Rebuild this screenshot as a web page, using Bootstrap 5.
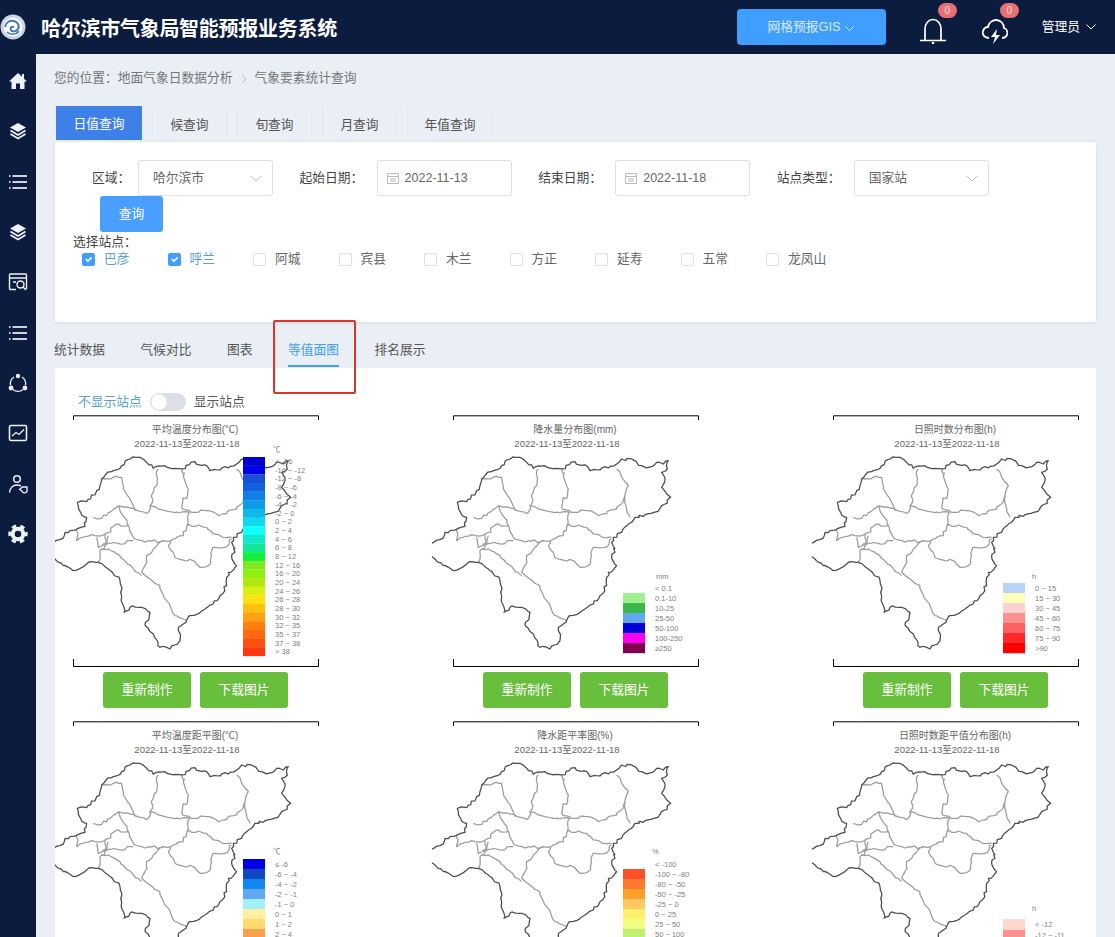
<!DOCTYPE html>
<html lang="zh-CN">

<head>
    <meta charset="UTF-8">
    <meta name="viewport" content="width=device-width, initial-scale=1.0">
    <title>哈尔滨市气象局智能预报业务系统</title>
    <link rel="stylesheet" href="https://cdn.jsdelivr.net/npm/bootstrap@5.3.0/dist/css/bootstrap.min.css">
    <style>
        html, body { height: 100%; }
        body { overflow: hidden; background: #0c1c3e; font-family: "Liberation Sans", "Noto Sans CJK SC", sans-serif; font-size: 12.75px; color: #555; }
        .qx-defs { position: absolute; width: 0; height: 0; }

        .qx-top { height: 54px; color: #fff; }
        .qx-title { margin: 3px 0 0 15px; font-size: 20px; font-weight: 700; letter-spacing: -.27px; }
        .qx-gis { width: 149px; height: 36px; background: #409eff; border: 0; border-radius: 4px; color: #dcebff; font-size: 12.75px; padding: 0; margin-right: 34px; }
        .qx-bell { width: 26px; height: 26px; margin-top: 8px; }
        .qx-bell + .qx-bell { margin-left: 36px; }
        .qx-count { top: -15px; left: 18px; width: 19px; height: 15px; padding: 0; line-height: 15px; font-size: 10px; font-weight: 400; background: #e87070; border-radius: 8px; color: #fde; }
        .qx-user { margin: 0 19px 0 34px; gap: 6px; }

        .qx-side { width: 36px; padding-top: 2px; flex: none; }
        .qx-side a { height: 50.3px; color: #eef2f8; }
        .qx-side svg { width: 20px; height: 20px; }

        .qx-main { background: #e9eff5; padding: 14px 19px 0 18px; overflow: hidden; min-width: 0; height: calc(100vh - 54px); }
        .qx-crumb { height: 20px; line-height: 20px; margin-bottom: 18px; color: #777; }
        .qx-crumb svg { margin: 0 7px 0 8px; }

        .qx-tabs { padding-left: 2px; height: 36px; }
        .qx-tabs .nav-link { width: 75px; height: 35px; padding: 10px 0 0; margin-right: 10px; text-align: center; color: #555; border: 1px solid #e5eaf0; border-bottom: 0; line-height: 16px; }
        .qx-tabs .nav-link.active { width: 86px; height: 34px; background: #3f80e8; color: #fff; border: 0; margin-right: 10px; }
        .qx-tabs .nav-item:last-child .nav-link { width: 86px; }

        .qx-panel { background: #fff; margin-left: 1px; border-radius: 2px; }
        .qx-filter { height: 180px; padding-top: 18px; box-shadow: 0 1px 4px rgba(0, 0, 0, .08); }
        .qx-fields { padding-left: 37px; gap: 26.6px; height: 36px; }
        .qx-label { width: 65px; margin: 0 12px 0 0; white-space: nowrap; color: #444; }
        .qx-label-short { width: 35px; margin-right: 11px; }
        .qx-select { width: 135px; height: 36px; padding: 0 14px; font-size: 12.75px; color: #666; border-color: #dcdfe6; border-radius: 3px; background-size: 12px 12px; background-position: right 10px center;
            background-image: url("data:image/svg+xml,%3csvg xmlns='http://www.w3.org/2000/svg' viewBox='0 0 12 12'%3e%3cpath fill='none' stroke='%23b8bcc4' d='M1 4l5 5 5-5'/%3e%3c/svg%3e"); }
        .qx-date { width: 135px; height: 36px; padding: 0 9px; gap: 6px; font-size: 12.5px; color: #666; border-color: #dcdfe6; border-radius: 3px; }
        .qx-query { width: 63px; height: 36px; margin-left: 45px; padding: 0; background: #4a9eff; border: 0; border-radius: 3px; color: #fff; font-size: 12.75px; display: block; }
        .qx-pick { margin-left: 18px; height: 20px; line-height: 20px; color: #444; }
        .qx-stations { padding-left: 27px; height: 18px; margin-top: -2px; }
        .qx-station { width: 85.5px; gap: 9px; color: #666; }
        .qx-station .form-check-input { width: 13px; height: 13px; margin: 0; border-color: #dcdfe6; border-radius: 2px; flex: none; }
        .qx-station .form-check-input:checked { background-color: #409eff; border-color: #409eff; }
        .qx-station.qx-on { color: #5a9fd8; }

        .qx-subtabs { gap: 35.5px; height: 46px; padding-top: 18px; }
        .qx-subtabs .nav-link { padding: 0 0 5px; line-height: 20px; height: 27px; color: #555; border-bottom: 2px solid transparent; }
        .qx-subtabs .nav-link.active { color: #409eff; border-bottom-color: #409eff; }

        .qx-maps { padding-top: 24px; height: 700px; overflow: hidden; }
        .qx-toggle { padding-left: 23px; height: 20px; margin-bottom: 3px; gap: 8px; }
        .qx-toggle .qx-off { color: #5a9fd8; }
        .qx-toggle .form-check-input { width: 36px; height: 18px; margin: 0; float: none; background-color: #dcdfe6; border: 0; background-image: url("data:image/svg+xml,%3csvg xmlns='http://www.w3.org/2000/svg' viewBox='-4 -4 8 8'%3e%3ccircle r='3.4' fill='%23fff'/%3e%3c/svg%3e"); }
        .qx-toggle .form-check { padding: 0; margin: 0; min-height: 0; height: 18px; }
        .qx-grid { display: grid; grid-template-columns: repeat(3, 380px); }
        .qx-plot { height: 306px; }
        .qx-plot svg { display: block; width: 265px; height: 257px; overflow: visible; }
        .qx-plot text { font-family: "Liberation Sans", "Noto Sans CJK SC", sans-serif; }
        .qx-acts { padding-left: 48px; gap: 9px; }
        .qx-green { width: 88px; height: 36px; padding: 0; background: #67bf3c; border: 0; border-radius: 3px; color: #fff; font-size: 12.75px; }

        .qx-mark { position: absolute; left: 237px; top: 266px; width: 83px; height: 74px; border: 2.5px solid #d9362b; border-radius: 2px; }
    </style>
</head>

<body>
    <svg class="qx-defs" aria-hidden="true">
        <defs>
            <symbol id="region" overflow="visible">
                <g transform="translate(-5 -6) scale(.3333)" fill="none" stroke-linejoin="round">
                    <g stroke="#9c9c9c" stroke-width="3.800">
                        <path d="M155 210L190 205 215 205 220 240 240 270 262 305 295 310 300 290 325 300 345 305 390 312 420 310" />
                        <path d="M325 180L320 230 300 290" />
                        <path d="M395 180L415 240 395 295 430 310 470 305 510 318 560 300 585 260 595 230 575 205 560 180" />
                        <path d="M585 260L590 300 600 325" />
                        <path d="M205 290L235 295 262 305" />
                        <path d="M205 290L235 350 255 390 290 398 340 395 370 390 400 380 420 310" />
                        <path d="M410 350L445 348 470 355 490 375 545 385" />
                        <path d="M360 395L360 420 385 450 430 455 450 475 475 470 490 415 525 415 545 390" />
                        <path d="M340 395L310 420 290 440 285 470 275 490 320 525 350 575 375 620 410 635" />
                        <path d="M155 420L175 420 210 440 250 480 275 500" />
                        <path d="M155 420L150 450 145 460" />
                        <path d="M78 362L80 395 100 385 135 380 165 375 205 345 235 350" />
                        <path d="M130 325L145 330 170 320 205 290" />
                        <path d="M140 385L145 415 170 405 175 380" />
                        <path d="M165 375L165 410 155 420" />
                        <path d="M160 410L250 395" />
                    </g>
                    <path stroke="#4c4c4c" stroke-width="3.800" d="M6 403L30 392 45 370 60 365 78 362 105 352 110 325 95 318 85 298 82 280 110 278 122 270 140 245 155 210 185 188 215 170 240 150 270 145 290 160 310 178 345 170 375 178 395 180 435 158 470 170 480 185 510 183 540 172 560 165 575 150 605 150 635 170 655 175 680 160 700 165 715 155 712 180 695 190 705 215 695 235 722 265 705 285 695 290 672 310 640 322 615 325 595 345 575 370 550 385 545 400 555 430 545 445 560 470 535 490 530 530 510 560 490 585 465 600 420 620 408 640 400 645 385 665 390 695 360 720 330 715 310 675 285 645 300 610 270 595 240 595 222 610 215 565 210 515 180 485 145 460 110 465 70 485 40 470 6 443" />
                </g>
            </symbol>
        </defs>
    </svg>

    <header class="qx-top d-flex align-items-center">
        <svg width="26" height="26" viewBox="0 0 26 26">
            <circle cx="13" cy="13" r="12.5" fill="#c9d5e5" />
            <circle cx="13" cy="13" r="9.5" fill="#fff" />
            <path fill="none" stroke="#3d78b8" stroke-width="2" d="M5 13c1-5 5-7 9-6 4 1 6 5 4 8-2 3-6 3-7 1-1-2 0-4 3-3" />
            <path fill="none" stroke="#3d78b8" stroke-width="1.5" d="M7 18c3 3 9 3 12-1" />
        </svg>
        <h1 class="qx-title">哈尔滨市气象局智能预报业务系统</h1>
        <div class="ms-auto d-flex align-items-center">
            <button type="button" class="btn qx-gis">网格预报GIS
                <svg width="11" height="7" viewBox="0 0 11 7"><path fill="none" stroke="currentColor" d="M1 1l4.5 4.5L10 1" /></svg>
            </button>
            <div class="position-relative qx-bell">
                <svg width="26" height="26" viewBox="0 0 26 26">
                    <path fill="none" stroke="#fff" stroke-width="1.7" d="M5 22V11C5 5.5 8.5 1.5 13 1.5S21 5.500 21 11V22M0 22.500H26" />
                    <circle cx="13" cy="25" r="1.300" fill="#fff" />
                </svg>
                <span class="badge position-absolute qx-count">0</span>
            </div>
            <div class="position-relative qx-bell">
                <svg width="26" height="26" viewBox="0 0 26 26">
                    <path fill="none" stroke="#fff" stroke-width="1.800" d="M7 20C2 20 0 16 1 13 2 10 4 9 6 9 7 4 11 2 14 2 19 2 22 6 22 10 25 11 26 14 25 17 24 19 22 20 20 20" />
                    <path fill="#fff" d="M15 11L9 19H13L11 26 18 17H14Z" />
                </svg>
                <span class="badge position-absolute qx-count">0</span>
            </div>
            <div class="qx-user d-flex align-items-center">管理员
                <svg width="10" height="6" viewBox="0 0 10 6"><path fill="none" stroke="#fff" d="M.5.500L5 5 9.500.5" /></svg>
            </div>
        </div>
    </header>

    <div class="d-flex">
        <nav class="qx-side nav flex-column">
            <a href="#" class="d-flex align-items-center justify-content-center"><svg viewBox="0 0 20 20"><path fill="currentColor" d="M10 2L1 10.500H3.500V18H8V12.500H12V18H16.500V10.500H19L16 7.700V3H14V5.800Z" /></svg></a>
            <a href="#" class="d-flex align-items-center justify-content-center"><svg viewBox="0 0 20 20"><path fill="currentColor" d="M10 2L18 6.500 10 11 2 6.500Z" /><path fill="none" stroke="currentColor" stroke-width="1.800" d="M2.500 9.500L10 14 17.500 9.500M2.500 13L10 17.500 17.500 13" /></svg></a>
            <a href="#" class="d-flex align-items-center justify-content-center"><svg viewBox="0 0 20 20"><path fill="none" stroke="currentColor" stroke-width="2" opacity=".85" d="M4.500 4H19M4.500 10H19M4.500 16H19M1 4H2.500M1 10H2.500M1 16H2.500" /></svg></a>
            <a href="#" class="d-flex align-items-center justify-content-center"><svg viewBox="0 0 20 20"><path fill="currentColor" d="M10 2L18 6.500 10 11 2 6.500Z" /><path fill="none" stroke="currentColor" stroke-width="1.800" d="M2.500 9.500L10 14 17.500 9.500M2.500 13L10 17.500 17.500 13" /></svg></a>
            <a href="#" class="d-flex align-items-center justify-content-center"><svg viewBox="0 0 20 20"><path fill="none" stroke="currentColor" stroke-width="1.400" d="M8 17.500H2.500A1 1 0 0 1 1.500 16.500V3A1 1 0 0 1 2.500 2H17.500A1 1 0 0 1 18.500 3V17M2 6H18M5 10H8" /><circle cx="12.500" cy="12.500" r="3.500" fill="none" stroke="currentColor" stroke-width="1.400" /><path stroke="currentColor" stroke-width="1.400" d="M15 15L18 18" /></svg></a>
            <a href="#" class="d-flex align-items-center justify-content-center"><svg viewBox="0 0 20 20"><path fill="none" stroke="currentColor" stroke-width="2" opacity=".85" d="M4.500 4H19M4.500 10H19M4.500 16H19M1 4H2.500M1 10H2.500M1 16H2.500" /></svg></a>
            <a href="#" class="d-flex align-items-center justify-content-center"><svg viewBox="0 0 20 20"><path fill="none" stroke="currentColor" stroke-width="1.300" d="M6 4A8 8 0 0 0 2.500 12M14 4A8 8 0 0 1 17.500 12M5 16.500A8 8 0 0 0 15 16.500" /><circle cx="10" cy="3" r="2.200" fill="currentColor" /><circle cx="3" cy="15" r="2.400" fill="currentColor" /><circle cx="17" cy="15" r="2.400" fill="currentColor" /></svg></a>
            <a href="#" class="d-flex align-items-center justify-content-center"><svg viewBox="0 0 20 20"><rect x="1.500" y="2.500" width="17" height="15" rx="1.500" fill="none" stroke="currentColor" stroke-width="1.600" /><path fill="none" stroke="currentColor" stroke-width="1.300" d="M4 13L8 9.500 11 11.500 16 6.500" /></svg></a>
            <a href="#" class="d-flex align-items-center justify-content-center"><svg viewBox="0 0 20 20"><circle cx="9" cy="5" r="3.300" fill="none" stroke="currentColor" stroke-width="1.500" /><path fill="none" stroke="currentColor" stroke-width="1.500" d="M1.500 18.500C2 14 5 11 9 11 10.500 11 12 11.400 13 12" /><path fill="none" stroke="currentColor" stroke-width="1.300" d="M11.500 15.500L14.500 13H19V15.500A2.500 2.500 0 0 1 14 17Z" /></svg></a>
            <a href="#" class="d-flex align-items-center justify-content-center"><svg viewBox="0 0 20 20"><circle cx="10" cy="10" r="5.300" fill="none" stroke="currentColor" stroke-width="4" /><circle cx="10" cy="10" r="8.200" fill="none" stroke="currentColor" stroke-width="3" stroke-dasharray="4.400 4.190" stroke-dashoffset="2.200" /></svg></a>
        </nav>

        <main class="qx-main flex-grow-1 position-relative">
            <div class="qx-crumb">您的位置：地面气象日数据分析<svg width="7" height="10" viewBox="0 0 7 10"><path fill="none" stroke="#b5bac2" d="M1 1l4 4-4 4" /></svg>气象要素统计查询</div>

            <ul class="nav qx-tabs">
                <li class="nav-item"><a class="nav-link active" href="#">日值查询</a></li>
                <li class="nav-item"><a class="nav-link" href="#">候查询</a></li>
                <li class="nav-item"><a class="nav-link" href="#">旬查询</a></li>
                <li class="nav-item"><a class="nav-link" href="#">月查询</a></li>
                <li class="nav-item"><a class="nav-link" href="#">年值查询</a></li>
            </ul>

            <section class="qx-panel qx-filter">
                <div class="d-flex align-items-center qx-fields">
                    <div class="d-flex align-items-center"><label class="qx-label qx-label-short">区域：</label>
                        <select class="form-select qx-select"><option>哈尔滨市</option></select></div>
                    <div class="d-flex align-items-center"><label class="qx-label">起始日期：</label>
                        <div class="form-control d-flex align-items-center qx-date"><svg width="12" height="12" viewBox="0 0 12 12"><path fill="none" stroke="#b8bcc4" d="M.5 1.500h11v10H.5zM.5 4.500h11M3 7h6M3 9h6" /></svg>2022-11-13</div></div>
                    <div class="d-flex align-items-center"><label class="qx-label">结束日期：</label>
                        <div class="form-control d-flex align-items-center qx-date"><svg width="12" height="12" viewBox="0 0 12 12"><path fill="none" stroke="#b8bcc4" d="M.5 1.500h11v10H.5zM.5 4.500h11M3 7h6M3 9h6" /></svg>2022-11-18</div></div>
                    <div class="d-flex align-items-center"><label class="qx-label">站点类型：</label>
                        <select class="form-select qx-select"><option>国家站</option></select></div>
                </div>
                <button type="button" class="btn qx-query">查询</button>
                <div class="qx-pick">选择站点：</div>
                <div class="d-flex qx-stations" id="stations"></div>
            </section>

            <ul class="nav qx-subtabs">
                <li class="nav-item"><a class="nav-link" href="#">统计数据</a></li>
                <li class="nav-item"><a class="nav-link" href="#">气候对比</a></li>
                <li class="nav-item"><a class="nav-link" href="#">图表</a></li>
                <li class="nav-item"><a class="nav-link active" href="#">等值面图</a></li>
                <li class="nav-item"><a class="nav-link" href="#">排名展示</a></li>
            </ul>

            <section class="qx-panel qx-maps">
                <div class="d-flex align-items-center qx-toggle">
                    <span class="qx-off">不显示站点</span>
                    <div class="form-check form-switch"><input class="form-check-input" type="checkbox" role="switch"></div>
                    <span>显示站点</span>
                </div>
                <div class="qx-grid" id="plots"></div>
            </section>

            <div class="qx-mark"></div>
        </main>
    </div>

    <script src="https://cdn.jsdelivr.net/npm/bootstrap@5.3.0/dist/js/bootstrap.bundle.min.js"></script>
    <script>
        const stations = ["巴彦", "呼兰", "阿城", "宾县", "木兰", "方正", "延寿", "五常", "龙凤山"];
        document.getElementById("stations").innerHTML = stations.map((name, i) => `
            <label class="d-flex align-items-center qx-station ${i < 2 ? "qx-on" : ""}">
                <input class="form-check-input" type="checkbox" ${i < 2 ? "checked" : ""}>${name}
            </label>`).join("");

        // roughen the map borders: split each segment and nudge the points
        let seed = 1;
        const wiggle = () => (Math.sin(seed++ * 12.9898) * 43758.5453 % 1) * 5;
        document.querySelectorAll("#region path").forEach(path => {
            const nums = path.getAttribute("d").match(/-?[\d.]+/g).map(Number);
            let d = `M${nums[0]} ${nums[1]}`;
            for (let i = 2; i < nums.length; i += 2) {
                const [x0, y0, x1, y1] = [nums[i - 2], nums[i - 1], nums[i], nums[i + 1]];
                const steps = Math.max(1, Math.round(Math.hypot(x1 - x0, y1 - y0) / 9));
                for (let s = 1; s < steps; s++) {
                    d += `L${x0 + (x1 - x0) * s / steps + wiggle()} ${y0 + (y1 - y0) * s / steps + wiggle()}`;
                }
                d += `L${x1} ${y1}`;
            }
            path.setAttribute("d", d);
        });

        const plots = [
            { title: "平均温度分布图(℃)", unit: "℃", ux: 218, uy: 37, y: 42, h: 8.65, rows: [
                ["#0000d0", "< -16"], ["#0000e8", "-16 ~ -12"], ["#1a4fd8", "-12 ~ -8"], ["#1060e0", "-8 ~ -6"], ["#0f7fe8", "-6 ~ -4"], ["#0f99e8", "-4 ~ -2"],
                ["#10b8ec", "-2 ~ 0"], ["#10d8f0", "0 ~ 2"], ["#10ffff", "2 ~ 4"], ["#10e8c8", "4 ~ 6"], ["#10e898", "6 ~ 8"], ["#10f040", "8 ~ 12"],
                ["#80e820", "12 ~ 16"], ["#90f010", "16 ~ 20"], ["#b0e810", "20 ~ 24"], ["#d8f010", "24 ~ 26"], ["#ffe010", "26 ~ 28"], ["#ffc010", "28 ~ 30"],
                ["#ffa010", "30 ~ 32"], ["#ff8010", "32 ~ 35"], ["#ff6810", "35 ~ 37"], ["#ff5010", "37 ~ 38"], ["#ff3810", "> 38"]] },
            { title: "降水量分布图(mm)", unit: "mm", ux: 221, uy: 164, y: 168, h: 10, rows: [
                [null, "< 0.1"], ["#a0f090", "0.1-10"], ["#3cb84a", "10-25"], ["#60a8f0", "25-50"], ["#0000d8", "50-100"], ["#ff00f0", "100-250"], ["#800050", "≥250"]] },
            { title: "日照时数分布图(h)", unit: "h", ux: 217, uy: 164, y: 168, h: 10, rows: [
                ["#b8d4f8", "0 ~ 15"], ["#ffffb8", "15 ~ 30"], ["#ffd0d0", "30 ~ 45"], ["#ff9090", "45 ~ 60"], ["#ff6060", "60 ~ 75"], ["#ff2828", "75 ~ 90"], ["#ff0000", ">90"]] },
            { title: "平均温度距平图(℃)", unit: "℃", ux: 218, uy: 133, y: 138, h: 10, rows: [
                ["#0000e8", "≤ -6"], ["#1048c0", "-6 ~ -4"], ["#1088f0", "-4 ~ -2"], ["#60a8f0", "-2 ~ -1"], ["#a0f0ff", "-1 ~ 0"], ["#fff0a0", "0 ~ 1"], ["#ffd870", "1 ~ 2"], ["#f8a050", "2 ~ 4"]] },
            { title: "降水距平率图(%)", unit: "%", ux: 217, uy: 133, y: 138, h: 10, rows: [
                [null, "< -100"], ["#ff5028", "-100 ~ -80"], ["#ff7830", "-80 ~ -50"], ["#ffa028", "-50 ~ -25"], ["#ffc860", "-25 ~ 0"], ["#fff070", "0 ~ 25"], ["#f0ff80", "25 ~ 50"], ["#c0f070", "50 ~ 100"]] },
            { title: "日照时数距平值分布图(h)", unit: "h", ux: 217, uy: 190, y: 198, h: 11, rows: [
                ["#ffd8cc", "< -12"], ["#ff9090", "-12 ~ -11"]] }
        ];

        document.getElementById("plots").innerHTML = plots.map(plot => {
            const legend = plot.rows.map(([color, label], i) => {
                const top = plot.y + i * plot.h;
                const bar = color ? `<rect x="188" y="${top}" width="22" height="${plot.h + .2}" fill="${color}" />` : "";
                return `${bar}<text x="220" y="${top + plot.h / 2 + 2.6}" font-size="7.5" fill="#808080">${label}</text>`;
            }).join("");
            return `
            <div class="qx-plot">
                <svg viewBox="0 0 265 257">
                    <path fill="none" stroke="#000" d="M18.500 5V.8H263.500V5M18.500 244V251.500H263.500V244" />
                    <text x="140" y="18" text-anchor="middle" font-size="10" fill="#666">${plot.title}</text>
                    <text x="132" y="32" text-anchor="middle" font-size="9.5" fill="#666">2022-11-13至2022-11-18</text>
                    <use href="#region" />
                    ${legend}
                    <text x="${plot.ux}" y="${plot.uy}" font-size="7.5" fill="#808080">${plot.unit}</text>
                </svg>
                <div class="d-flex qx-acts">
                    <button type="button" class="btn qx-green">重新制作</button>
                    <button type="button" class="btn qx-green">下载图片</button>
                </div>
            </div>`;
        }).join("");
    </script>
</body>

</html>
